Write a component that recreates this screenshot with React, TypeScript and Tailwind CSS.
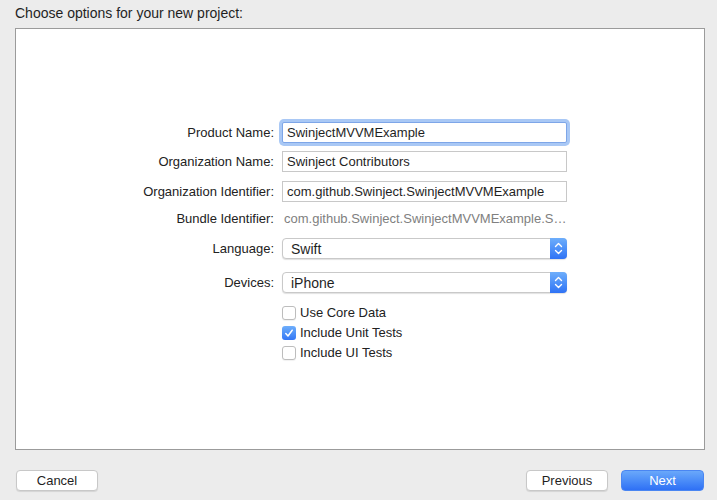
import React from 'react';

const font = { fontFamily: '"Liberation Sans", Arial, sans-serif' };

function Label({ children }: { children: React.ReactNode }) {
    return <div className="w-[258px] shrink-0 text-right text-[13px] leading-[16px] text-[#222]">{children}</div>;
}

function TextField({ value, focused }: { value: string; focused?: boolean }) {
    return (
        <div
            className={
                'ml-[8px] flex h-[21px] w-[285px] items-center border bg-white pl-[4px] text-[13px] leading-[16px] text-[#1f1f1f] ' +
                (focused ? 'rounded-[2px] border-[#7ea6e8] shadow-[0_0_0_3px_#a9c8f5]' : 'border-[#c8c8c8]')
            }
        >
            {value}
        </div>
    );
}

function Popup({ value }: { value: string }) {
    return (
        <div className="ml-[8px] flex h-[21px] w-[285px] items-stretch rounded-[4px] border border-[#c9c9c9] bg-white shadow-[0_1px_1px_rgba(0,0,0,0.12)]">
            <div className="flex flex-1 items-center pl-[8px] text-[14px] leading-[16px] text-[#1f1f1f]">{value}</div>
            <div className="-my-px -mr-px flex w-[17px] items-center justify-center rounded-r-[4px] bg-gradient-to-b from-[#6eaefb] to-[#2f72f5]">
                <svg width="17" height="21" viewBox="0 0 17 21" fill="none">
                    <path d="M5.5 8.5 L8.5 5.5 L11.5 8.5" stroke="white" strokeWidth="1.4" strokeLinecap="round" strokeLinejoin="round" />
                    <path d="M5.5 12.5 L8.5 15.5 L11.5 12.5" stroke="white" strokeWidth="1.4" strokeLinecap="round" strokeLinejoin="round" />
                </svg>
            </div>
        </div>
    );
}

function Check({ label, checked }: { label: string; checked?: boolean }) {
    return (
        <div className="flex h-[20px] items-center">
            <div className="w-[266px] shrink-0" />
            {checked ? (
                <div className="flex h-[14px] w-[14px] items-center justify-center rounded-[3px] bg-gradient-to-b from-[#6eaefb] to-[#3476f5]">
                    <svg width="14" height="14" viewBox="0 0 14 14" fill="none">
                        <path d="M3.8 7.6 L6 10 L10.2 4.2" stroke="white" strokeWidth="1.5" strokeLinecap="round" strokeLinejoin="round" />
                    </svg>
                </div>
            ) : (
                <div className="h-[14px] w-[14px] rounded-[3px] border border-[#bdbdbd] bg-white shadow-[0_1px_1px_rgba(0,0,0,0.06)]" />
            )}
            <span className="ml-[4px] text-[13px] leading-[16px] text-[#222]">{label}</span>
        </div>
    );
}

function Button({ children, primary, className }: { children: React.ReactNode; primary?: boolean; className?: string }) {
    return (
        <div
            className={
                'flex h-[21px] items-center justify-center rounded-[4px] text-[13px] leading-[16px] ' +
                (primary
                    ? 'border border-[#4a86f2] bg-gradient-to-b from-[#6aa8fa] to-[#2f70f5] text-white'
                    : 'border border-[#c8c8c8] bg-white text-[#1f1f1f] shadow-[0_1px_1px_rgba(0,0,0,0.1)]') +
                ' ' +
                (className ?? '')
            }
        >
            {children}
        </div>
    );
}

export default function App() {
    return (
        <div className="flex h-[500px] w-[717px] flex-col bg-[#ececec]" style={font}>
            <div className="h-[28px] pl-[15px] pt-[5px] text-[14px] leading-[16px] text-[#1f1f1f]">Choose options for your new project:</div>

            <div className="ml-[15px] flex h-[422px] w-[690px] flex-col border border-[#9b9b9b] bg-white pt-[93px]">
                <div className="flex h-[21px] items-center">
                    <Label>Product Name:</Label>
                    <TextField value="SwinjectMVVMExample" focused />
                </div>
                <div className="mt-[8px] flex h-[21px] items-center">
                    <Label>Organization Name:</Label>
                    <TextField value="Swinject Contributors" />
                </div>
                <div className="mt-[9px] flex h-[21px] items-center">
                    <Label>Organization Identifier:</Label>
                    <TextField value="com.github.Swinject.SwinjectMVVMExample" />
                </div>
                <div className="mt-[6px] flex h-[21px] items-center">
                    <Label>Bundle Identifier:</Label>
                    <div className="ml-[10px] text-[13px] leading-[16px] text-[#808080]">com.github.Swinject.SwinjectMVVMExample.S…</div>
                </div>
                <div className="mt-[9px] flex h-[21px] items-center">
                    <Label>Language:</Label>
                    <Popup value="Swift" />
                </div>
                <div className="mt-[13px] flex h-[21px] items-center">
                    <Label>Devices:</Label>
                    <Popup value="iPhone" />
                </div>
                <div className="mt-[10px] flex flex-col">
                    <Check label="Use Core Data" />
                    <Check label="Include Unit Tests" checked />
                    <Check label="Include UI Tests" />
                </div>
            </div>

            <div className="mt-[20px] flex h-[21px] items-center pl-[16px] pr-[13px]">
                <Button className="w-[82px]">Cancel</Button>
                <div className="flex-1" />
                <Button className="w-[82px]">Previous</Button>
                <Button primary className="ml-[13px] w-[83px]">Next</Button>
            </div>
        </div>
    );
}
